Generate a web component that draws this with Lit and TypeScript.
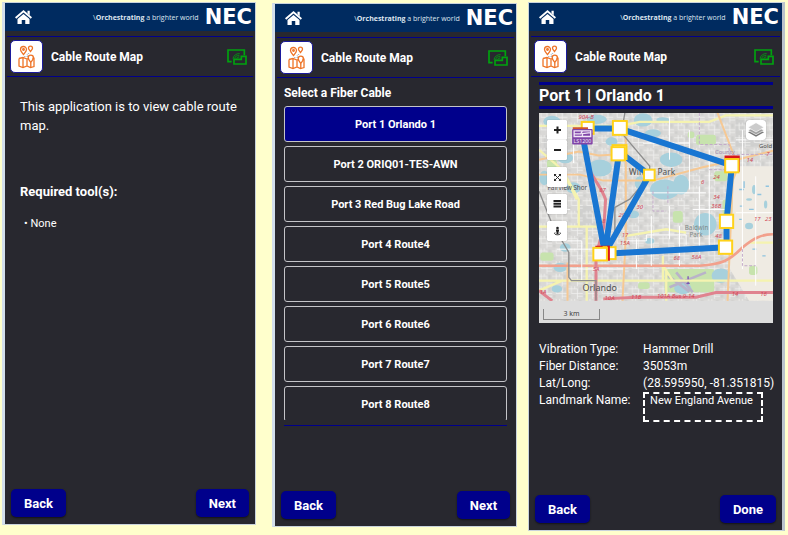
import { LitElement, html, css, svg } from "lit";
import { customElement, property, state } from "lit/decorators.js";

const FONT = css`
  :host {
    font-family: Roboto, "Liberation Sans", sans-serif;
    color: #fff;
  }
  * {
    box-sizing: border-box;
  }
  button,
  textarea {
    font: inherit;
    color: inherit;
  }
`;

@customElement("phone-screen")
class PhoneScreen extends LitElement {
  @property() next = "Next";

  static styles = [
    FONT,
    css`
      :host {
        display: flex;
        flex-direction: column;
        box-sizing: border-box;
        min-width: 0;
        background: #28282f;
        border: 1px solid #c9d3dc;
      }
      .brand {
        height: 28px;
        flex: none;
        display: flex;
        align-items: center;
        padding: 0 3px 0 10px;
        background: #002b60;
      }
      .home {
        display: block;
        width: 17px;
        height: 14px;
      }
      .tagline {
        margin-left: auto;
        font-family: "Open Sans", sans-serif;
        font-size: 7px;
        white-space: nowrap;
        color: #dfe6ef;
      }
      .logo {
        margin-left: 6px;
        font: 900 21px/28px "DejaVu Sans", sans-serif;
      }
      .app {
        margin: 5px 2px 0;
        height: 41px;
        flex: none;
        display: flex;
        align-items: center;
        gap: 8px;
        padding: 0 6px 0 3px;
        border: solid #00008b;
        border-width: 1px 0;
      }
      .tile {
        width: 33px;
        height: 33px;
        flex: none;
        background: #fff;
        border: 1px solid #1a1a9c;
        border-radius: 5px;
      }
      .tile svg,
      .cast {
        display: block;
      }
      h1 {
        margin: 0;
        font-size: 12px;
        font-weight: 700;
        white-space: nowrap;
      }
      .cast {
        margin-left: auto;
        width: 20px;
        height: 16px;
      }
      main {
        flex: 1;
      }
      footer {
        display: flex;
        justify-content: space-between;
        padding: 0 6px 7px;
      }
      footer button {
        height: 28px;
        min-width: 53px;
        padding: 0 13px;
        border: 0;
        border-radius: 5px;
        background: #00008b;
        font-size: 13px;
        font-weight: 700;
        box-shadow: 0 1px 2px #0008;
      }
    `,
  ];

  render() {
    return html`
      <header class="brand">
        <svg class="home" viewBox="0 0 34 28" fill="#fff" role="img" aria-label="Home">
          <path d="M17 0 34 14.500 31.500 17.500 17 5.200 2.500 17.500 0 14.500Z" />
          <path d="M25 1.500h4.500v9L25 6.700Z" />
          <path d="M17 8 29 18v10h-8.500v-8h-7v8H5V18Z" />
        </svg>
        <span class="tagline">\\<b>Orchestrating</b> a brighter world</span>
        <span class="logo">NEC</span>
      </header>
      <div class="app">
        <div class="tile">
          <svg viewBox="0 0 31 31" fill="none" stroke="#ee7326" stroke-width="1.300">
            <path d="M12.500 13.500c-2-2.500-3-3.500-3-5a3 3 0 0 1 6 0c0 1.500-1 2.500-3 5Z" />
            <circle cx="12.500" cy="8.500" r=".8" />
            <path d="M19.500 10.500c-1.300-1.700-2-2.400-2-3.300a2 2 0 0 1 4 0c0 .9-.7 1.600-2 3.300Z" />
            <path d="M13 15.500h4l-1-2.500 3-1" stroke="#9aa7b5" stroke-width=".8" stroke-dasharray="1.500 1" />
            <path d="M8 17.500l4-1 4 1.500 2-.7M21.500 17.500l1.500-.3v8.300l-3.500 1-3.500-1.500-4 1.500-4-1.500v-7.500M12 16.500v9.500M16 18v7M19.800 22v4.500" />
            <path d="M19.800 21.500c-1.800-2.500-2.600-3.200-2.600-4.700a2.600 2.600 0 0 1 5.200 0c0 1.500-.8 2.200-2.600 4.700Z" />
          </svg>
        </div>
        <h1>Cable Route Map</h1>
        <svg class="cast" viewBox="0 0 60 48" fill="none" stroke="#00a30f" stroke-width="5" role="img" aria-label="Connected">
          <path d="M14 38H3V3H52V19" />
          <path d="M21 31V45H57V22H43V31Z" />
          <path d="M18 29a18 18 0 0 1 20-15M23 29a12 12 0 0 1 14-9M29 29a7 7 0 0 1 8-5" stroke-width="2.500" />
        </svg>
      </div>
      <main><slot></slot></main>
      <footer>
        <button type="button">Back</button>
        <button type="button">${this.next}</button>
      </footer>
    `;
  }
}

const ROADS = [
  { c: "#f5f3b0", w: 7, d: "M6 48H250l60-12H520l50-20H712M6 120l70 60 50 90v80M6 352H180M120 270l-30-60M6 515H380V440M6 545l70-30M380 515H712M390 480v96M380 470l30 45M150 576V350M640 400h72M270 380l120-20 60 10" },
  { c: "#f6c893", w: 6, d: "M6 150l120-25 60 12 90-5M6 195H130l70 18H350l150-40 90-20 122-30M545 9l50 130-5 90-15 347M268 80V380l-10 196M92 460v116M575 250l25-60" },
  { c: "#f2a08c", w: 8, d: "M6 470H490c70-5 90-15 130-55 35-30 60-40 92-40" },
  { c: "#e0838f", w: 9, d: "M145 130c10 70 45 90 62 140l-5 80-24 90v136M6 545l40 31M200 570l100-5 180 0 60-14H712" },
  { c: "#fff", w: 3, d: "M270 395h60v-18h120v30M300 390v90M345 320v150M400 290v100M430 350v120M45 395h90v120M60 420h120M100 480h160M490 230v200M520 120v300M460 60v180M620 60v420M660 200v330M600 310h112M470 300h100M30 300h70M110 60v100M330 250h180M400 20v130M320 100h140M600 90h112" },
];

const LAKES = [
  [45, 35, 26, 18], [180, 28, 30, 14], [320, 30, 28, 20], [350, 70, 24, 12], [85, 145, 24, 16],
  [190, 175, 36, 26], [110, 235, 22, 17], [405, 150, 34, 22], [385, 240, 44, 30], [435, 225, 24, 30],
  [310, 220, 15, 20], [290, 315, 18, 12], [508, 345, 34, 34], [85, 415, 16, 13], [70, 475, 20, 14],
  [555, 500, 28, 22], [440, 538, 26, 18], [60, 540, 16, 11], [640, 350, 12, 10], [225, 95, 18, 13],
  [380, 30, 20, 8], [22, 205, 15, 22], [340, 395, 14, 9], [655, 240, 6, 14], [640, 270, 9, 4], [690, 285, 5, 12],
];

const PARKS = [
  [480, 75, 60, 30], [410, 305, 30, 35], [10, 430, 40, 25], [385, 480, 150, 70], [535, 185, 40, 30],
  [560, 270, 30, 45], [640, 470, 25, 28], [30, 150, 30, 25], [455, 65, 20, 20], [305, 520, 35, 20],
];

const REFS: [number, number, string][] = [
  [125, 28, "90A-B"], [188, 246, "87"], [196, 340, "8"], [300, 298, "30"], [246, 324, "29-B"],
  [256, 382, "17"], [250, 408, "15A"], [168, 486, "5A"], [204, 574, "10A"], [284, 570, "11B"],
  [362, 568, "101A Bus 9-14"], [412, 454, "68"], [466, 450, "58A"], [495, 222, "6"], [532, 208, "24"],
  [632, 158, "14"], [692, 140, "7"], [532, 270, "34"], [526, 296, "36B"], [538, 386, "48"],
  [655, 334, "17"], [688, 334, "23"], [588, 560, "14"], [674, 562, "16"], [8, 556, "1A"],
];

const NODES: [number, number, number][] = [
  [153, 54, 36], [250, 54, 42], [249, 127, 42], [245, 132, 40], [339, 196, 32],
  [572, 336, 40], [569, 414, 40], [219, 432, 36],
];

@customElement("route-map")
class RouteMap extends LitElement {
  static styles = [
    FONT,
    css`
      :host {
        display: block;
        position: relative;
        background: #ddd;
      }
      .tiles {
        display: block;
        width: 100%;
      }
      .tools {
        position: absolute;
        top: 7px;
        left: 8px;
        display: flex;
        flex-direction: column;
        gap: 7px;
      }
      .zoom {
        display: flex;
        flex-direction: column;
      }
      button {
        display: block;
        width: 20px;
        height: 20px;
        padding: 0;
        border: 0;
        border-radius: 1px;
        background: #fff;
        box-shadow: 0 0 1px #0008;
      }
      button svg {
        display: block;
      }
      .layers {
        position: absolute;
        top: 7px;
        right: 7px;
        border-radius: 3px;
      }
      .scale {
        padding: 8px 0 3px 4px;
      }
      .bar {
        width: 57px;
        height: 11px;
        border: solid #888;
        border-width: 0 1px 1px;
        font: 7px/9px "Noto Sans", sans-serif;
        text-align: center;
        color: #444;
      }
    `,
  ];

  render() {
    return html`
      <svg class="tiles" viewBox="6 9 706 567" role="img" aria-label="Cable route around Orlando">
        <defs>
          <pattern id="streets" width="46" height="38" patternUnits="userSpaceOnUse">
            <path d="M0 8h30v30M12 0v22h34M30 30h16M22 8v-8" fill="none" stroke="#f4f4f2" stroke-width="2" />
            <path d="M2 26h8v8h-8zM34 4h8v12h-8z" fill="#cfcfcd" />
          </pattern>
        </defs>
        <rect x="6" y="9" width="706" height="567" fill="#d9d8d6" />
        <path d="M20 80h90v60H20zM420 100h50v70h-50zM300 410h110v60H300zM600 30h90v80h-90zM120 290h60v60h-60z" fill="#d0d0cf" />
        <rect x="6" y="9" width="706" height="567" fill="url(#streets)" />
        <path d="M590 170h122v406H640l-60-100z" fill="#efebe3" />
        ${PARKS.map(([x, y, w, h]) => svg`<rect x=${x} y=${y} width=${w} height=${h} rx="8" fill="#c7e3ad" />`)}
        ${LAKES.map(([x, y, rx, ry]) => svg`<ellipse cx=${x} cy=${y} rx=${rx} ry=${ry} fill="#a7d0dc" />`)}
        <path d="M610 240h14M625 215v20M612 290h10M640 300h14M665 255h12M690 230h10M650 420h12M610 330h8M680 440h10" stroke="#8fc4e0" stroke-width="4" />
        <path d="M395 500l65 48M400 535l110-45M420 490l50 60" stroke="#b9b3c9" stroke-width="8" />
        <path d="M456 502v24M446 514h20M451 523h10" stroke="#7a55b5" stroke-width="4" />
        <g fill="none">
          ${ROADS.map((r) => svg`<path d=${r.d} stroke=${r.c} stroke-width=${r.w} />`)}
          <path d="M6 245l40 100 50 85v75l8 10h74v60M265 9l-10 60 85 100v30l-60 70-45 25v90" stroke="#8d8d8d" stroke-width="4" />
          <path d="M490 9v95h90v30h130M520 180h60v70M350 245v60h40M395 230v50M620 420v50h40" stroke="#c3a9c9" stroke-width="3" stroke-dasharray="9 5" />
        </g>
        <g font-family="Noto Sans, sans-serif" font-size="18" font-style="italic" fill="#cf4555">
          ${REFS.map(([x, y, t]) => svg`<text x=${x} y=${y}>${t}</text>`)}
        </g>
        <g font-family="Noto Sans, sans-serif" fill="#505050">
          <text x="278" y="195" font-size="25">Winter</text>
          <text x="364" y="195" font-size="25">Park</text>
          <text x="32" y="242" font-size="19">Fairview Shor</text>
          <text x="137" y="547" font-size="27">Orlando</text>
          <text x="670" y="114" font-size="18">Gold</text>
          <g fill="#7f8987" font-size="19">
            <text x="446" y="361">Baldwin</text>
            <text x="460" y="384">Park</text>
          </g>
          <text x="537" y="132" font-size="18" fill="#a68bb0">County</text>
        </g>
        <path
          d="M250 127 339 196 205 432M247 132 205 432 138 80M153 56H250L588 167 572 336V414L205 434"
          fill="none" stroke="#1976d2" stroke-width="18" stroke-linejoin="round"
        />
        <path d="M566 137h46v49h-46zM176 410h44v44h-44z" fill="#d9161a" />
        ${NODES.map(([x, y, s]) => svg`<rect x=${x - s / 2} y=${y - s / 2} width=${s} height=${s} fill="#fff" stroke="#ffd21a" stroke-width="6" />`)}
        <path d="M212 410h8v44h-8z" fill="#d9161a" />
        <rect x="568" y="148" width="40" height="40" fill="#fff" stroke="#ffd21a" stroke-width="6" />
        <rect x="170" y="416" width="41" height="38" fill="#fff" stroke="#ffd21a" stroke-width="6" />
        <path d="M108 52h46v14h-46z" fill="#d2592d" />
        <rect x="106" y="57" width="62" height="47" rx="3" fill="#7f45a8" />
        <path d="M112 63h50v17h-50zM112 72h20l5-9M137 80v-9l25-3" fill="none" stroke="#f1e6f7" stroke-width="4" />
        <text x="110" y="99" font-family="Noto Sans, sans-serif" font-size="16" fill="#f1e6f7">LS1200</text>
      </svg>
      <div class="tools">
        <div class="zoom">
          <button type="button" aria-label="Zoom in">
            <svg viewBox="0 0 20 20"><path d="M7 10h7M10.500 6.500v7" stroke="#222" stroke-width="2" /></svg>
          </button>
          <button type="button" aria-label="Zoom out">
            <svg viewBox="0 0 20 20"><path d="M7 10h7" stroke="#222" stroke-width="2" /></svg>
          </button>
        </div>
        <button type="button" aria-label="Full screen">
          <svg viewBox="0 0 20 20"><path d="M8 8l5 5M13 8l-5 5" stroke="#333" stroke-width="1" /><path d="M7 7h2.500L7 9.500zM14 7v2.500L11.500 7zM7 14v-2.500L9.500 14zM14 14h-2.500l2.500-2.500z" fill="#222" /></svg>
        </button>
        <button type="button" aria-label="List">
          <svg viewBox="0 0 20 20"><path d="M6.500 7h7.500M6.500 9.700h7.500M6.500 12.400h7.500" stroke="#222" stroke-width="2" /></svg>
        </button>
        <button type="button" aria-label="My position">
          <svg viewBox="0 0 20 20"><path d="M10.500 9v4M9 9.500h3" stroke="#222" stroke-width="2" /><circle cx="10.500" cy="7" r="1.300" fill="#222" /><path d="M8 11.500c-2.500 3 7.500 3 5 0" fill="none" stroke="#222" /></svg>
        </button>
      </div>
      <button class="layers" type="button" aria-label="Layers">
        <svg viewBox="0 0 60 60">
          <path d="M30 24 54 37 30 50 6 37Z" fill="#777" />
          <path d="M30 18 54 31 30 44 6 31Z" fill="#a0a0a0" stroke="#fff" stroke-width="2" />
          <path d="M30 8 54 22 30 36 6 22Z" fill="#cbcbcb" stroke="#fff" stroke-width="2" />
        </svg>
      </button>
      <div class="scale"><div class="bar">3 km</div></div>
    `;
  }
}

const PORTS = [
  "Port 1 Orlando 1",
  "Port 2 ORIQ01-TES-AWN",
  "Port 3 Red Bug Lake Road",
  "Port 4 Route4",
  "Port 5 Route5",
  "Port 6 Route6",
  "Port 7 Route7",
  "Port 8 Route8",
];

@customElement("app-root")
class AppRoot extends LitElement {
  @state() selected = 0;

  static styles = [
    FONT,
    css`
      :host {
        display: flex;
        align-items: stretch;
        min-height: 100vh;
        box-sizing: border-box;
        padding: 2px 3px 4px 2px;
        background: #ffffcc;
      }
      .intro {
        flex: 254 1 0;
        margin: 0 16px 6px 0;
        border-left: 3px solid #d3dfec;
      }
      .select {
        flex: 245 1 0;
        margin: 1px 11px 4px 0;
        border-left: 3px solid #d3dfec;
      }
      .result {
        flex: 257 1 0;
        border-right: 3px solid #b9c3cc;
      }
      .about {
        padding: 20px 10px 0 15px;
      }
      .about p {
        margin: 0;
        font-size: 13px;
        line-height: 19px;
      }
      .about h2 {
        margin: 49px 0 0;
        font-size: 13px;
        line-height: 16px;
        font-weight: 700;
      }
      .about ul {
        margin: 16px 0 0;
        padding: 0 0 0 4px;
        list-style: none;
        font-size: 11px;
        line-height: 16px;
      }
      .about li::before {
        content: "• ";
      }
      .cables {
        padding: 7px 9px 0;
      }
      .cables h2 {
        margin: 0 0 5px;
        font-size: 12px;
        line-height: 16px;
        font-weight: 700;
      }
      .list {
        height: 314px;
        overflow: hidden;
        display: flex;
        flex-direction: column;
        gap: 4px;
      }
      .list button {
        flex: none;
        height: 36px;
        border: 1px solid #c4c4c8;
        border-radius: 3px;
        background: none;
        font-size: 11px;
        font-weight: 700;
      }
      .list .on {
        background: #00008b;
      }
      .cables hr {
        margin: 5px 0 0;
        border: 0;
        border-top: 1px solid #00008b;
      }
      .report {
        padding: 5px 9px 0 10px;
      }
      .report h2 {
        margin: 0 0 4px;
        border: solid #00008b;
        border-width: 3px 0;
        font-size: 16px;
        line-height: 21px;
        font-weight: 700;
      }
      .facts {
        margin-top: 18px;
        display: grid;
        grid-template-columns: 104px 1fr;
        grid-auto-rows: 17px;
        font-size: 12px;
        line-height: 17px;
        white-space: nowrap;
      }
      textarea {
        display: block;
        width: 120px;
        height: 30px;
        padding: 0 5px;
        border: 2px dashed #fff;
        background: none;
        resize: none;
        overflow: hidden;
        font-size: 11px;
        line-height: 14px;
      }
    `,
  ];

  render() {
    return html`
      <phone-screen class="intro">
        <div class="about">
          <p>This application is to view cable route map.</p>
          <h2>Required tool(s):</h2>
          <ul><li>None</li></ul>
        </div>
      </phone-screen>
      <phone-screen class="select">
        <div class="cables">
          <h2>Select a Fiber Cable</h2>
          <div class="list">
            ${PORTS.map(
              (name, i) => html`<button
                type="button"
                class=${i === this.selected ? "on" : ""}
                @click=${() => (this.selected = i)}
              >${name}</button>`
            )}
          </div>
          <hr />
        </div>
      </phone-screen>
      <phone-screen class="result" next="Done">
        <div class="report">
          <h2>Port 1 | Orlando 1</h2>
          <route-map></route-map>
          <div class="facts">
            <span>Vibration Type:</span><span>Hammer Drill</span>
            <span>Fiber Distance:</span><span>35053m</span>
            <span>Lat/Long:</span><span>(28.595950, -81.351815)</span>
            <label for="landmark">Landmark Name:</label>
            <textarea id="landmark" .value=${"New England Avenue"}></textarea>
          </div>
        </div>
      </phone-screen>
    `;
  }
}
